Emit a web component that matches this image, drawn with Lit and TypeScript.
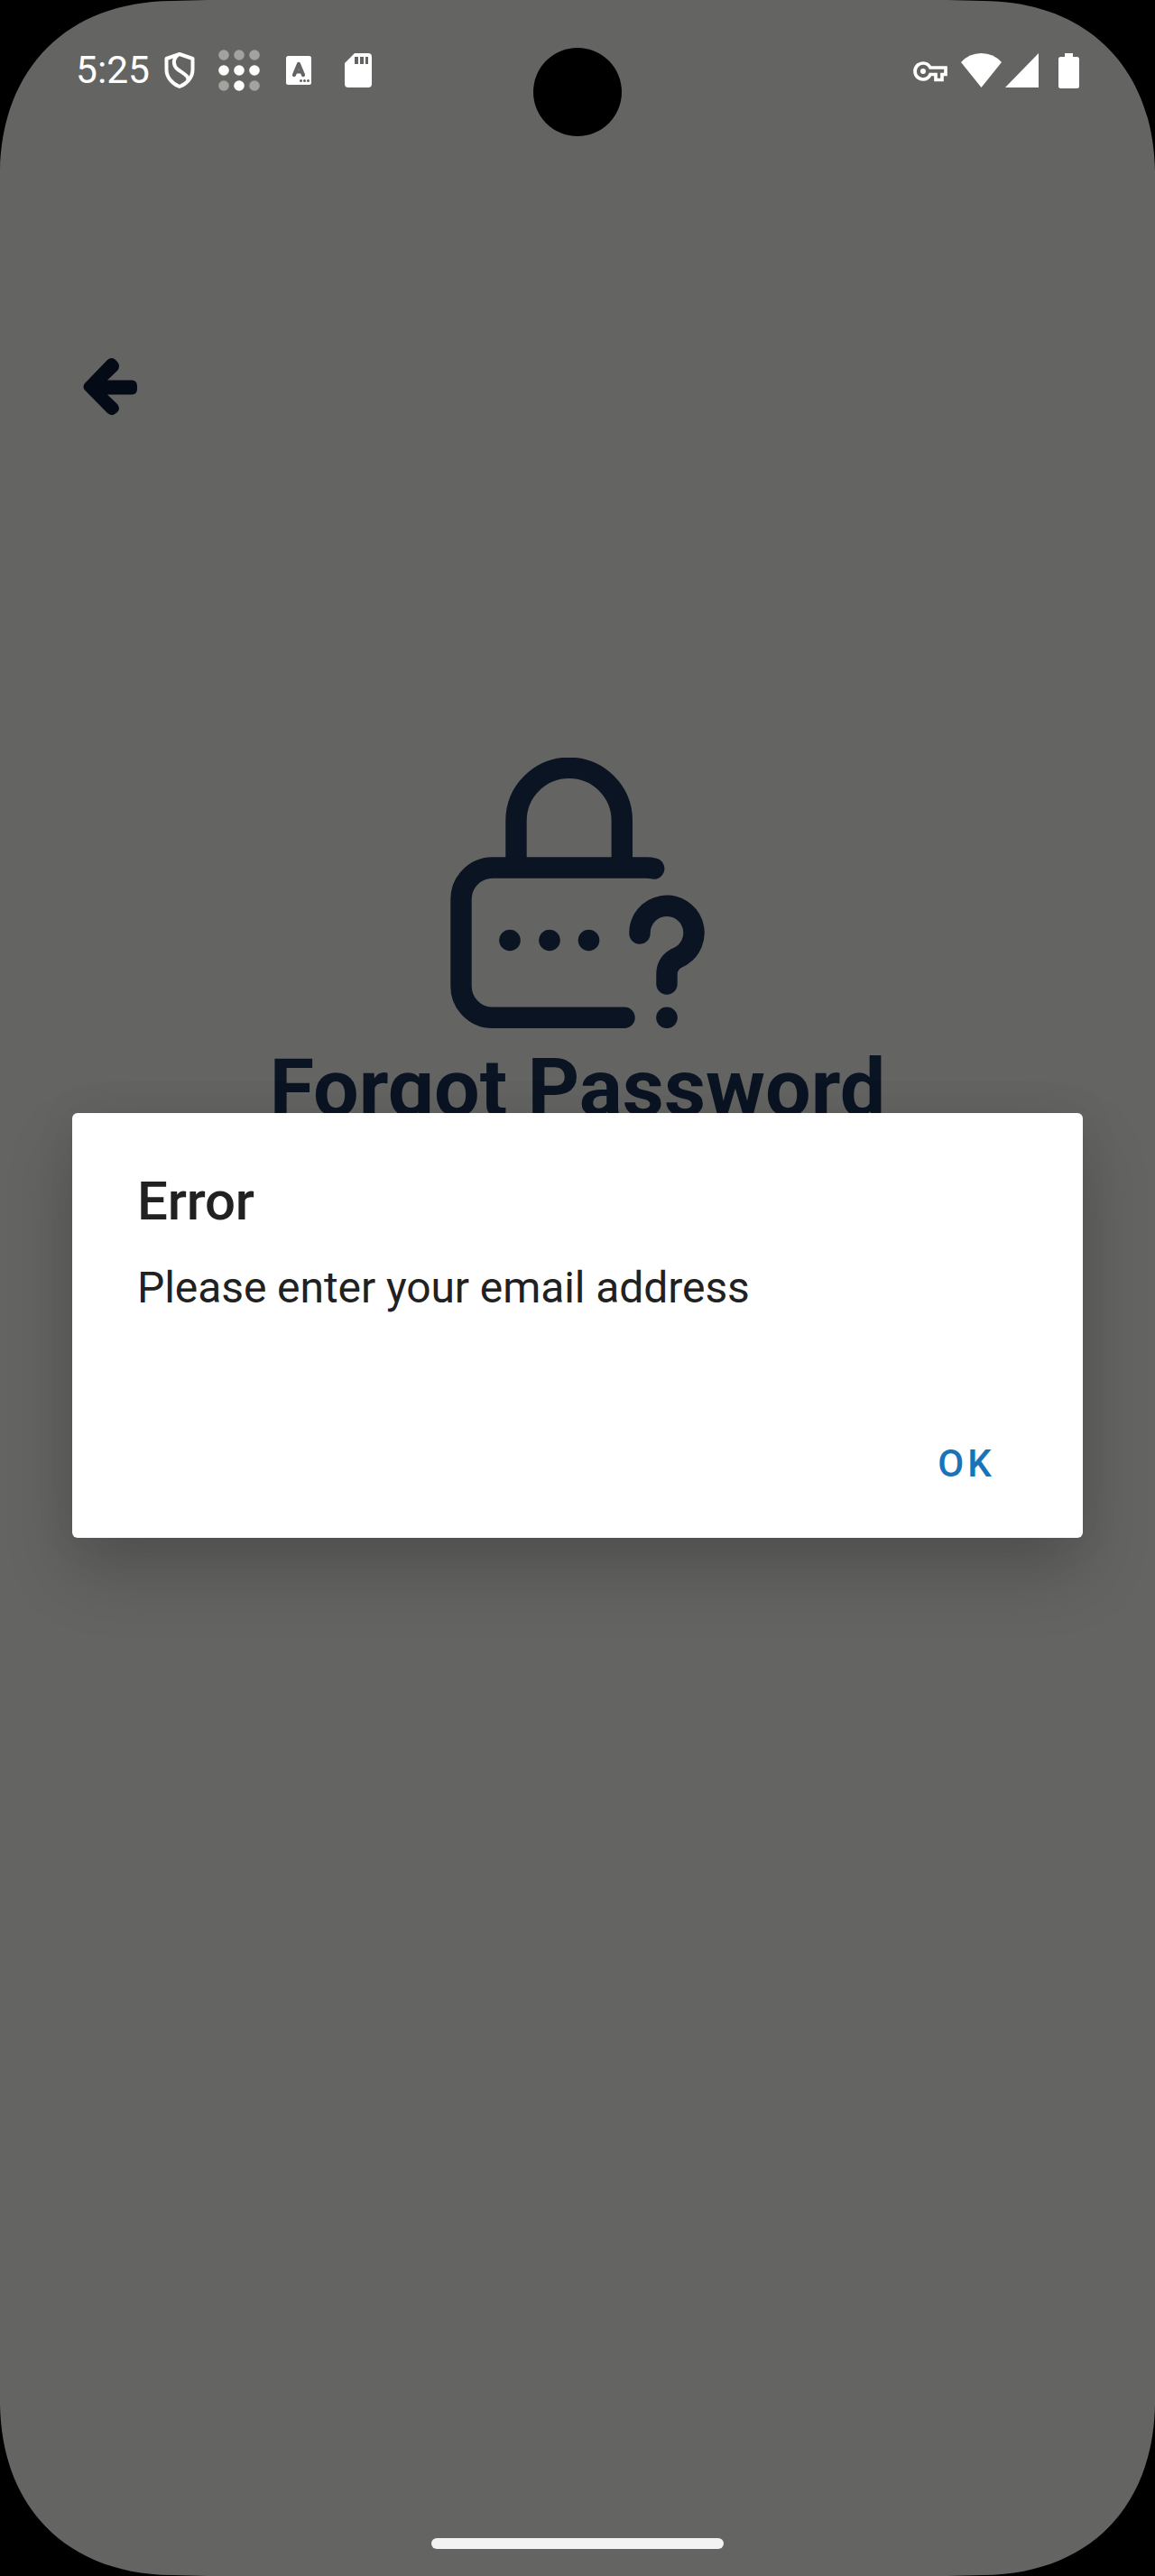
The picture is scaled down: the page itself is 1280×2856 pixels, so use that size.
import { LitElement, html, css } from "lit";
import { customElement } from "lit/decorators.js";

@customElement("status-bar")
class StatusBar extends LitElement {
  static styles = css`
    :host { display: flex; height: 156px; box-sizing: border-box; padding: 46px 84px 0 84px; justify-content: space-between; align-items: flex-start; color: #fff; }
    .side { display: flex; align-items: center; height: 64px; }
    .time { font: 400 42.5px/64px Roboto, sans-serif; width: 82px; white-space: nowrap; }
    svg { display: block; flex: none; fill: #fff; }
    .shield { margin-left: 16px; }
    .dots { margin-left: 26px; }
    .lang { margin-left: 29px; }
    .card { margin-left: 37px; }
    .key { margin-top: 2px; }
    .wifi { margin-left: 15px; }
    .cell { margin-left: 4px; }
    .battery { margin-left: 22px; }
  `;
  render() {
    return html`
      <div class="side">
        <span class="time">5:25</span>
        <svg class="shield" width="34" height="40" viewBox="0 0 34 40">
          <path d="M17 2 L31.500 7 V19 C31.500 28 25 35 17 38 C9 35 2.500 28 2.500 19 V7 Z" fill="none" stroke="#fff" stroke-width="4" stroke-linejoin="round"/>
          <path d="M15 3 C9 8 10 15 15 19 C22 24 28.500 27 26 32" fill="none" stroke="#fff" stroke-width="4"/>
        </svg>
        <svg class="dots" width="46" height="46" viewBox="0 0 46 46">
          <g opacity=".4"><circle cx="6" cy="6" r="5.8"/><circle cx="23" cy="6" r="5.8"/><circle cx="40" cy="6" r="5.8"/><circle cx="6" cy="40" r="5.8"/><circle cx="40" cy="40" r="5.8"/></g>
          <circle cx="6" cy="23" r="5.8"/><circle cx="23" cy="23" r="5.8"/><circle cx="40" cy="23" r="5.8"/><circle cx="23" cy="40" r="5.8"/>
        </svg>
        <svg class="lang" width="28" height="32" viewBox="0 0 28 32">
          <rect width="28" height="32" rx="2.5"/>
          <path d="M9 21 L14 9 L19 21 M10.500 17.500 H17.500" fill="none" stroke="#646462" stroke-width="4.200" stroke-linecap="round" stroke-linejoin="round"/>
          <g fill="#646462"><circle cx="16.500" cy="27.500" r="1.500"/><circle cx="20.500" cy="27.500" r="1.500"/><circle cx="24.500" cy="27.500" r="1.500"/></g>
        </svg>
        <svg class="card" width="30" height="38" viewBox="0 0 30 38">
          <path fill-rule="evenodd" d="M11 0 H26 Q30 0 30 4 V34 Q30 38 26 38 H4 Q0 38 0 34 V11 Z M11 4 V12 H15 V4 Z M17 4 V12 H21 V4 Z M23 4 V12 H26 V4 Z"/>
        </svg>
      </div>
      <div class="side">
        <svg class="key" width="38" height="23" viewBox="0 0 38 23">
          <path d="M11 2 C15 2 17.500 4 19 7 H36 V14.500 H32 V20.500 H25 V14.500 H19 C17.500 18 15 20 11 20 A9 9 0 0 1 11 2 Z" fill="none" stroke="#fff" stroke-width="3.700"/>
          <circle cx="11" cy="11" r="3"/>
        </svg>
        <svg class="wifi" width="45" height="38" viewBox="0 0 45 38"><path d="M0 10 Q9 0 22.500 0 Q36 0 45 10 L22.500 38 Z"/></svg>
        <svg class="cell" width="37" height="38" viewBox="0 0 37 38"><path d="M37 0 V38 H0 Z"/></svg>
        <svg class="battery" width="23" height="39" viewBox="0 0 23 39"><path d="M7 0 H16 V4 H20.500 Q23 4 23 6.500 V36.500 Q23 39 20.500 39 H2.500 Q0 39 0 36.500 V6.500 Q0 4 2.500 4 H7 Z"/></svg>
      </div>`;
  }
}

@customElement("alert-dialog")
class AlertDialog extends LitElement {
  static styles = css`
    :host { display: flex; flex-direction: column; box-sizing: border-box; width: 1120px; height: 471px; padding: 64px 72px 47px; border-radius: 6px; background: #fff; color: #212121; font-family: Roboto, sans-serif; box-shadow: 0 38px 76px rgba(0,0,0,.19), 0 0 50px rgba(0,0,0,.06); }
    h2 { margin: 0; font-size: 60px; line-height: 68px; font-weight: 500; letter-spacing: -.2px; }
    p { margin: 29px 0 0; font-size: 48px; line-height: 66px; letter-spacing: -.08px; white-space: nowrap; }
    button { margin: auto 25px 0 auto; padding: 0; border: 0; background: none; color: #1a73b7; font: 500 42px/70px Roboto, sans-serif; letter-spacing: 4.200px; }
  `;
  render() {
    return html`<h2>Error</h2><p>Please enter your email address</p><button>OK</button>`;
  }
}

@customElement("app-root")
class AppRoot extends LitElement {
  static styles = css`
    :host { display: block; background: #000; }
    .screen { position: relative; display: flex; flex-direction: column; height: 2856px; overflow: hidden; background: #646462; clip-path: path("M0 190 C2 75 75 2 190 1 L230 0 H1050 L1090 1 C1205 2 1278 75 1280 190 V2666 C1278 2781 1205 2854 1090 2855 L1050 2856 H230 L190 2855 C75 2854 2 2781 0 2666 Z"); }
    svg { display: block; }
    .back { margin: 241px 0 0 92px; }
    .lock { margin: 379px 0 0 499px; }
    h1 { margin: 14px 0 0; text-align: center; font: 700 89.8px/106px Roboto, sans-serif; color: #0b1422; white-space: nowrap; }
    .camera { position: absolute; left: 591px; top: 53px; width: 98px; height: 98px; border-radius: 50%; background: #000; }
    .dialog { position: absolute; left: 80px; top: 1234px; }
    .home { width: 324px; height: 12px; margin: auto auto 30px; border-radius: 6px; background: #f2f2f2; }
  `;
  render() {
    return html`
      <main class="screen">
        <status-bar></status-bar>
        <svg class="back" width="61" height="64" viewBox="0 0 61 64">
          <path d="M1.500 28.500 L27 2 Q32 -2 36 2 L38 4 Q42 9 38 14 L27 24.500 H54 Q60 24.500 60 31 V34 Q60 40.500 54 40.500 H27 L38 51 Q42 56 38 60 L36 61.500 Q32 65 27 61 L1.500 35 Q-.5 32 1.500 28.500 Z" fill="#040b16"/>
        </svg>
        <svg class="lock" width="283" height="300" viewBox="0 0 283 300">
          <g fill="none" stroke="#0b1422" stroke-width="23.400" stroke-linecap="round">
            <path d="M73 116 V70 A58.600 58.600 0 0 1 190.300 70 V116" stroke-linecap="butt"/>
            <path d="M225.700 123 Q222 122 217 122 H47 A35 35 0 0 0 12 157 V253 A35 35 0 0 0 47 288.300 H193"/>
            <path d="M210 195 A30 30 0 1 1 253.500 221 Q240 227 240 240 V251"/>
          </g>
          <g fill="#0b1422"><circle cx="66" cy="202.500" r="11.800"/><circle cx="110" cy="202.500" r="11.800"/><circle cx="153.500" cy="202.500" r="11.800"/><circle cx="240" cy="288.300" r="11.800"/></g>
        </svg>
        <h1>Forgot Password</h1>
        <div class="home"></div>
        <div class="camera"></div>
        <alert-dialog class="dialog"></alert-dialog>
      </main>`;
  }
}
